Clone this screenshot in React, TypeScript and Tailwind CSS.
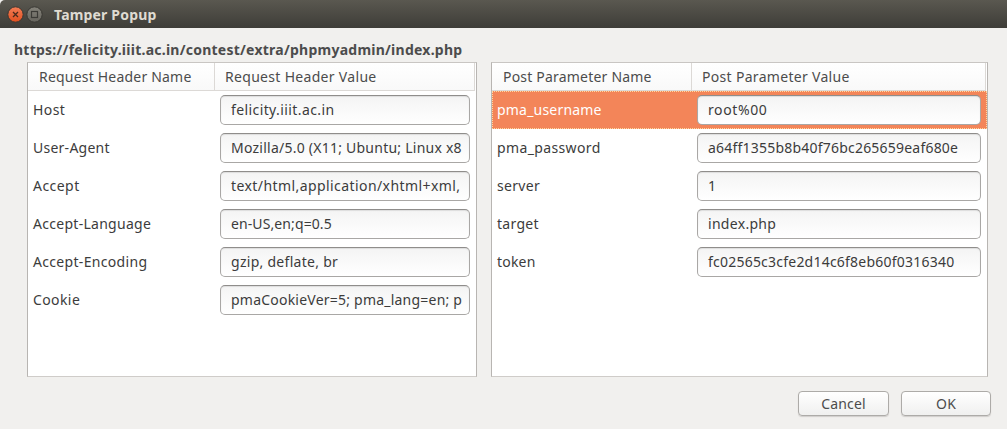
import { useState } from "react";

type Row = { name: string; value: string; nameTracking: string; valueTracking: string };

const headers: Row[] = [
  { name: "Host", value: "felicity.iiit.ac.in", nameTracking: "tracking-[0.4px]", valueTracking: "tracking-[0.4px]" },
  { name: "User-Agent", value: "Mozilla/5.0 (X11; Ubuntu; Linux x8", nameTracking: "tracking-[0.25px]", valueTracking: "tracking-[0.24px]" },
  { name: "Accept", value: "text/html,application/xhtml+xml,", nameTracking: "tracking-[0.45px]", valueTracking: "tracking-[0.42px]" },
  { name: "Accept-Language", value: "en-US,en;q=0.5", nameTracking: "tracking-[0.28px]", valueTracking: "tracking-[0.1px]" },
  { name: "Accept-Encoding", value: "gzip, deflate, br", nameTracking: "tracking-[0.32px]", valueTracking: "tracking-[0.28px]" },
  { name: "Cookie", value: "pmaCookieVer=5; pma_lang=en; p", nameTracking: "tracking-[0.4px]", valueTracking: "tracking-[0.22px]" },
];

const params: Row[] = [
  { name: "pma_username", value: "root%00", nameTracking: "tracking-[0.2px]", valueTracking: "tracking-[0.6px]" },
  { name: "pma_password", value: "a64ff1355b8b40f76bc265659eaf680e", nameTracking: "tracking-[0.37px]", valueTracking: "tracking-[0.21px]" },
  { name: "server", value: "1", nameTracking: "tracking-[0.3px]", valueTracking: "" },
  { name: "target", value: "index.php", nameTracking: "tracking-[0.3px]", valueTracking: "tracking-[0.3px]" },
  { name: "token", value: "fc02565c3cfe2d14c6f8eb60f0316340", nameTracking: "tracking-[0.2px]", valueTracking: "tracking-[0.22px]" },
];

type TableProps = {
  width: string;
  columns: string;
  inputWidth: string;
  titles: [string, string];
  rows: Row[];
  selected?: number;
  onSelect?: (index: number) => void;
};

function Table({ width, columns, inputWidth, titles, rows, selected, onSelect }: TableProps) {
  return (
    <section className={`${width} h-[315px] border border-[#b8b5b2] border-t-[#c9c6c3] border-b-[#cfccc9] bg-white`}>
      <div className={`grid ${columns} mr-px h-7 border-b border-[#dcd9d6] bg-linear-to-b from-white to-[#f9f9f9] text-[#4c4c4c]`}>
        <div className="flex items-center border-r border-[#dcd9d6] pl-[11px] tracking-[0.2px] whitespace-nowrap">
          {titles[0]}
        </div>
        <div className="flex items-center border-r border-[#dcd9d6] pl-[10px] tracking-[0.31px] whitespace-nowrap">
          {titles[1]}
        </div>
      </div>
      {rows.map((row, i) => (
        <div
          key={row.name}
          onClick={() => onSelect?.(i)}
          className={`grid ${columns} h-[38px] items-center ${
            selected === i ? "bg-[#f38559] text-white outline-1 -outline-offset-1 outline-dotted outline-[#ffd9a0]" : "text-[#3c3c3c]"
          }`}
        >
          <span className={`pl-[5px] ${row.nameTracking}`}>{row.name}</span>
          <div
            className={`${inputWidth} ml-[5px] flex h-[30px] items-center rounded-[5px] border border-[#a9a7a5] border-t-[#8f8d8b] bg-linear-to-b from-[#f4f4f4] to-white px-[10px] text-[#3c3c3c] shadow-[inset_0_1px_1px_#dddddd]`}
          >
            <span className={`whitespace-nowrap ${row.valueTracking}`}>{row.value}</span>
          </div>
        </div>
      ))}
    </section>
  );
}

export default function App() {
  const [selected, setSelected] = useState(0);
  return (
    <div className="flex h-[429px] w-[1007px] flex-col overflow-hidden bg-[#f1f0ee] font-['Noto_Sans',sans-serif] text-[14px] leading-5 text-[#3c3c3c]">
      <header className="flex h-7 items-center rounded-tl-[5px] bg-linear-to-b from-[#5a5850] to-[#3e3d38] pl-[7px]">
        <svg width="36" height="18" viewBox="0 0 36 18">
          <defs>
            <linearGradient id="close" x1="0" y1="0" x2="0" y2="1">
              <stop offset="0" stopColor="#f37d56" />
              <stop offset="1" stopColor="#e2501f" />
            </linearGradient>
            <linearGradient id="max" x1="0" y1="0" x2="0" y2="1">
              <stop offset="0" stopColor="#85837b" />
              <stop offset="1" stopColor="#66645d" />
            </linearGradient>
          </defs>
          <circle cx="8.5" cy="9.5" r="7.7" fill="url(#close)" stroke="#383732" strokeWidth="1" />
          <path d="M6 7l5 5M11 7l-5 5" stroke="#4a2a1c" strokeWidth="1.3" />
          <circle cx="27.5" cy="9.5" r="7.7" fill="url(#max)" stroke="#383732" strokeWidth="1" />
          <rect x="24.5" y="6.5" width="6" height="6" fill="none" stroke="#3c3b37" strokeWidth="1.2" />
        </svg>
        <h1 className="ml-[11px] mt-[2px] text-[14px] font-bold tracking-[0.18px] text-[#dfdbd2]">Tamper Popup</h1>
      </header>
      <h2 className="ml-[14px] mt-[12px] h-[22px] text-[14px] font-bold tracking-[0.245px] text-[#4c4c4c]">
        https://felicity.iiit.ac.in/contest/extra/phpmyadmin/index.php
      </h2>
      <main className="ml-[27px] flex gap-[14px]">
        <Table
          width="w-[450px]"
          columns="grid-cols-[187px_1fr]"
          inputWidth="w-[250px]"
          titles={["Request Header Name", "Request Header Value"]}
          rows={headers}
        />
        <Table
          width="w-[497px]"
          columns="grid-cols-[200px_1fr]"
          inputWidth="w-[284px]"
          titles={["Post Parameter Name", "Post Parameter Value"]}
          rows={params}
          selected={selected}
          onSelect={setSelected}
        />
      </main>
      <footer className="mt-[14px] mr-4 flex justify-end gap-3">
        {["Cancel", "OK"].map((label) => (
          <button
            key={label}
            className="h-[25px] w-[90px] rounded-[4px] border border-[#adaba8] bg-linear-to-b from-white to-[#f0f0ef] tracking-[0.15px] text-[#4c4c4c] shadow-[0_1px_1px_#d0cecb] first:w-[91px]"
          >
            {label}
          </button>
        ))}
      </footer>
    </div>
  );
}
